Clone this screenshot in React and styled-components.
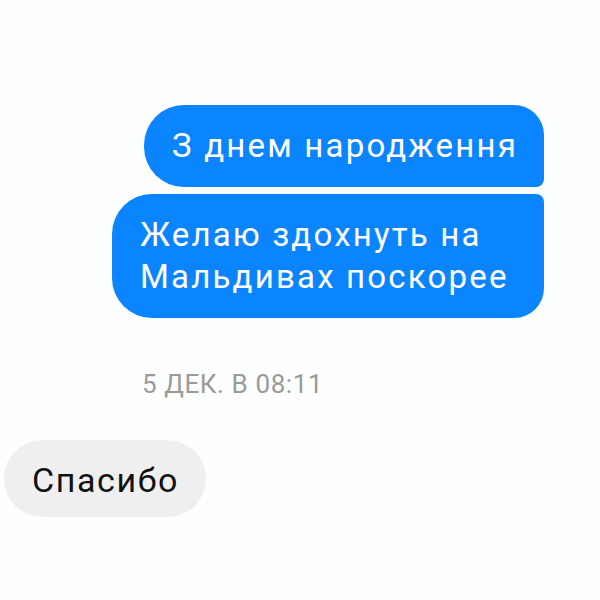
import React from 'react';
import styled, {createGlobalStyle} from 'styled-components';

const Global = createGlobalStyle`
    body {
        margin: 0;
        background: #fdfefe;
        font-family: Roboto, "Liberation Sans", sans-serif;
    }
`

const Chat = styled.div`
    width: 600px;
    height: 600px;
    box-sizing: border-box;
    padding-top: 105px;
    display: flex;
    flex-direction: column;
    overflow: hidden;
`

const Outgoing = styled.div`
    display: flex;
    flex-direction: column;
    align-items: flex-end;
    gap: 7px;
    padding-right: 56px;
`

const Bubble = styled.div`
    box-sizing: border-box;
    max-width: 432px;
    padding: ${p => p.mine ? '20px 26px 20px 28px' : '19px 27px 15px 28px'};
    font-size: ${p => p.mine ? '33px' : '34px'};
    line-height: ${p => p.mine ? '42px' : '43px'};
    letter-spacing: ${p => p.mine ? '2.2px' : '1.6px'};
    color: ${p => p.mine ? '#fff' : '#111'};
    background: ${p => p.mine ? '#0a84ff' : '#efefef'};
    border-radius: ${p => p.radius};
`

const DateLabel = styled.div`
    margin: 51px 0 0 142px;
    font-size: 26px;
    line-height: 30px;
    letter-spacing: 0.6px;
    color: #9a9a9a;
`

const Incoming = styled.div`
    display: flex;
    padding: 41px 0 0 4px;
`

const App = () => {
    return (
        <Chat>
            <Global/>
            <Outgoing>
                <Bubble mine radius="40px 30px 8px 40px">З днем народження</Bubble>
                <Bubble mine radius="40px 8px 30px 40px">Желаю здохнуть на Мальдивах поскорее</Bubble>
            </Outgoing>
            <DateLabel>5 ДЕК. В 08:11</DateLabel>
            <Incoming>
                <Bubble radius="40px">Спасибо</Bubble>
            </Incoming>
        </Chat>
    )
}

export default App
